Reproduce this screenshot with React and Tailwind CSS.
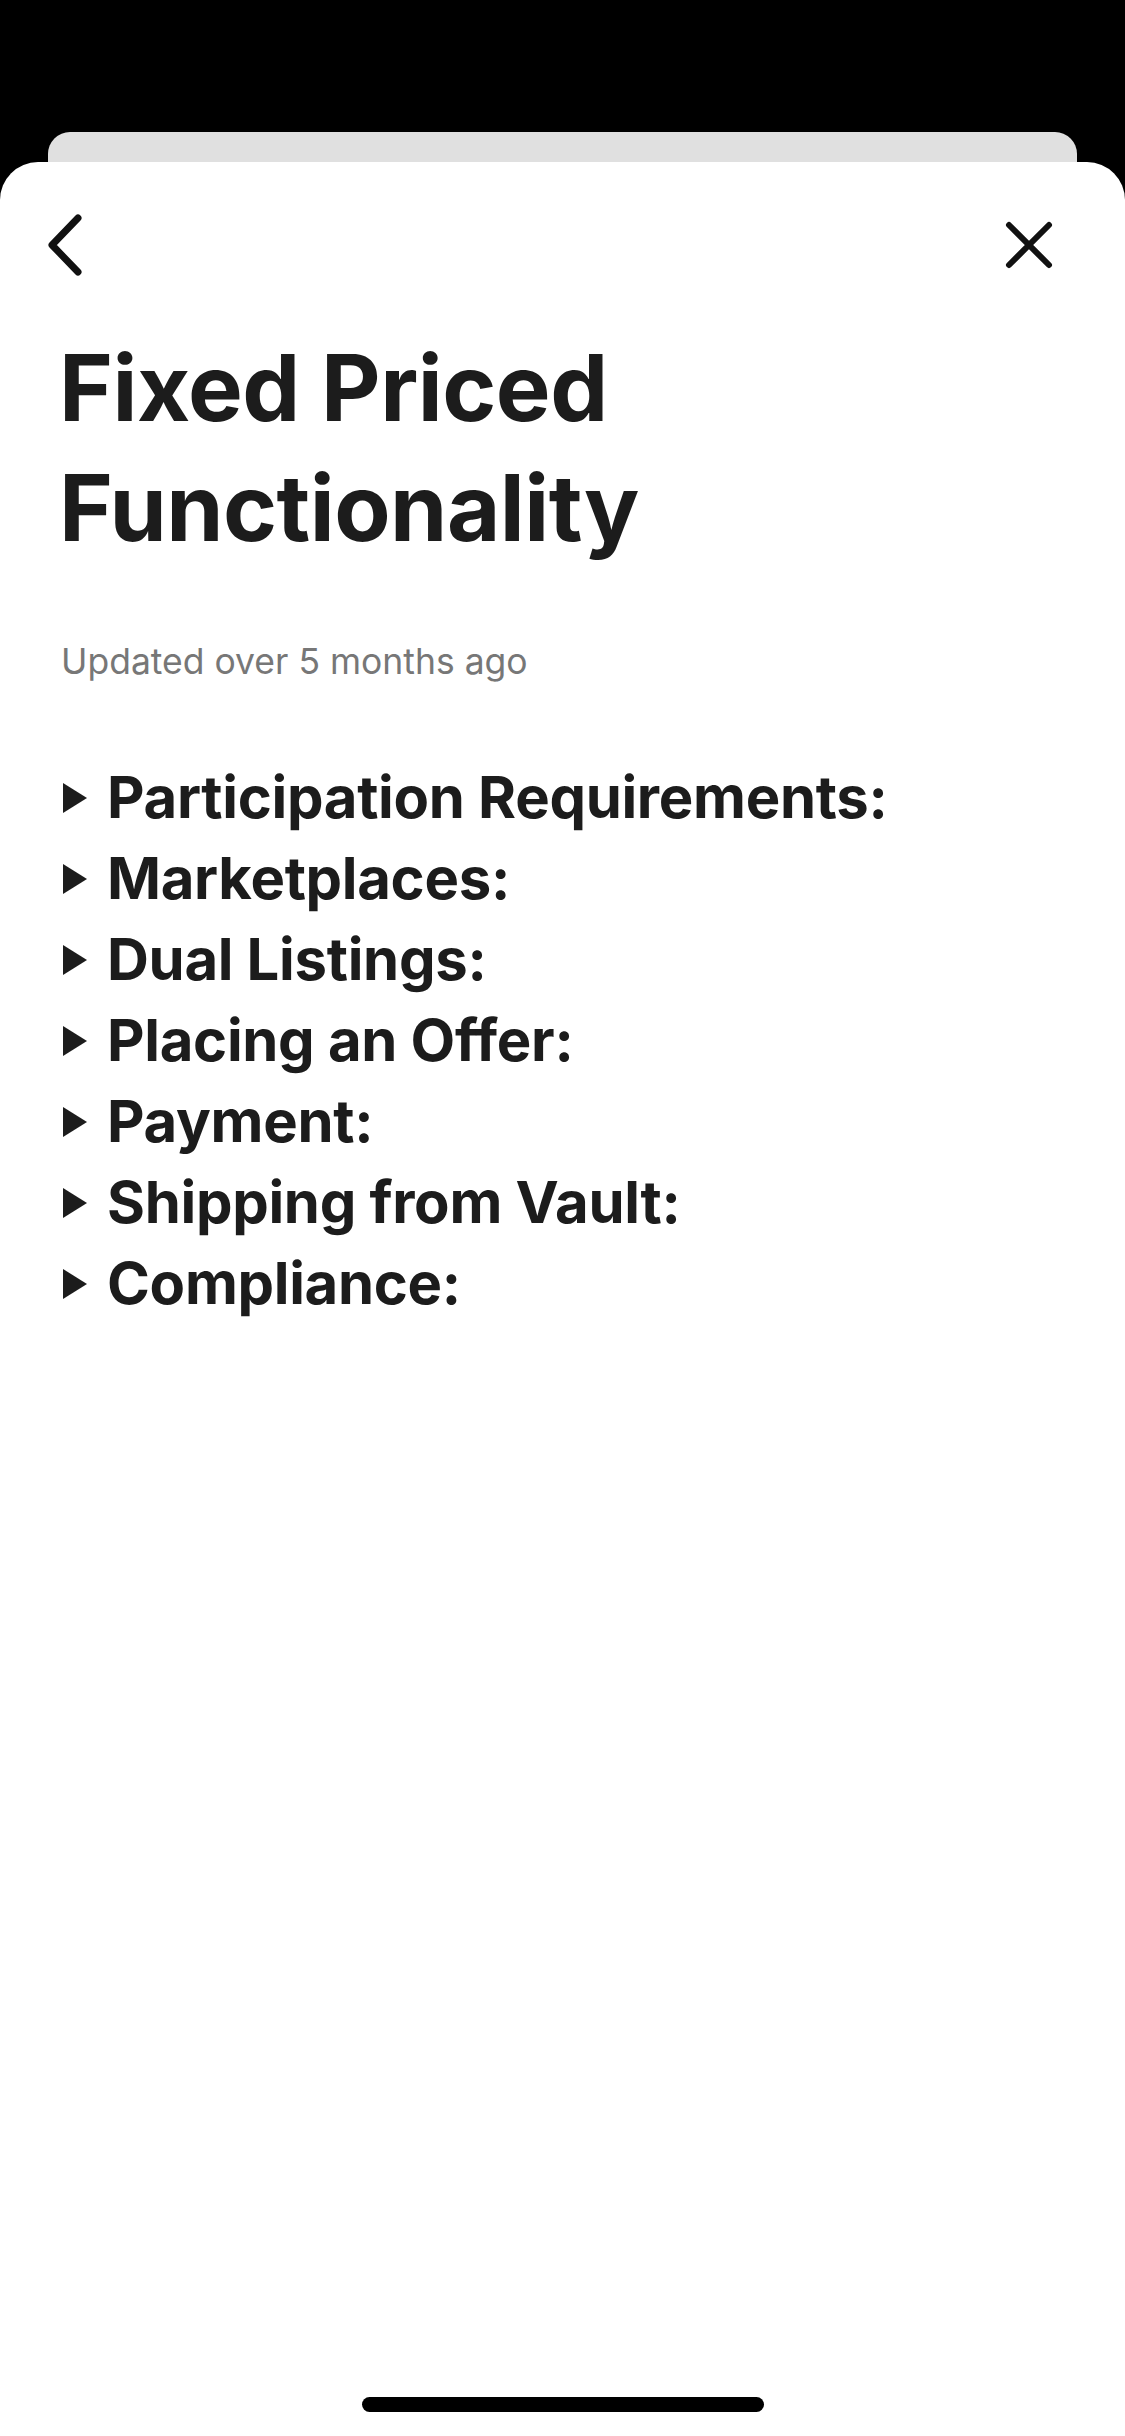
import React from "react";

const sections = [
	"Participation Requirements:",
	"Marketplaces:",
	"Dual Listings:",
	"Placing an Offer:",
	"Payment:",
	"Shipping from Vault:",
	"Compliance:",
];

function Triangle() {
	return (
		<svg width="26" height="32" viewBox="0 0 26 32" className="shrink-0">
			<path d="M1 1 L25 16 L1 31 Z" fill="#1c1c1c" />
		</svg>
	);
}

export default function App() {
	return (
		<div
			className="w-[1125px] h-[2436px] bg-black flex flex-col overflow-hidden"
			style={{ fontFamily: "Inter, 'Noto Sans', sans-serif" }}
		>
			<div className="h-[132px] shrink-0" />
			{/* card behind the sheet */}
			<div className="mx-[48px] h-[30px] shrink-0 bg-[#e0e0e0] rounded-t-[22px]" />
			<div className="flex-1 bg-white rounded-t-[38px] flex flex-col px-[62px]">
				<div className="flex justify-between items-center pt-[53px] h-[112px]">
					<svg width="40" height="62" viewBox="0 0 40 62" className="-ml-[17px]">
						<path
							d="M33 4 L7 31 L33 58"
							fill="none"
							stroke="#111"
							strokeWidth="7"
							strokeLinecap="round"
							strokeLinejoin="round"
						/>
					</svg>
					<svg width="48" height="48" viewBox="0 0 48 48" className="mr-[10px]">
						<path
							d="M4 4 L44 44 M44 4 L4 44"
							fill="none"
							stroke="#111"
							strokeWidth="6"
							strokeLinecap="round"
						/>
					</svg>
				</div>
				<h1 className="mt-[54px] -ml-[3px] text-[92px] leading-[120px] font-bold text-[#1c1c1c] tracking-[-0.5px]">
					Fixed Priced
					<br />
					Functionality
				</h1>
				<p className="mt-[72px] -ml-[1px] text-[35.5px] leading-[44px] text-[#777777]">
					Updated over 5 months ago
				</p>
				<ul className="mt-[73px] flex flex-col">
					{sections.map((s) => (
						<li key={s} className="flex items-center gap-[19px] h-[81px]">
							<Triangle />
							<span className="text-[58px] font-bold text-[#1c1c1c] tracking-[-0.3px]">{s}</span>
						</li>
					))}
				</ul>
				<div className="flex-1" />
				<div className="flex justify-center pb-[24px]">
					<div className="w-[402px] h-[15px] rounded-full bg-black" />
				</div>
			</div>
		</div>
	);
}
